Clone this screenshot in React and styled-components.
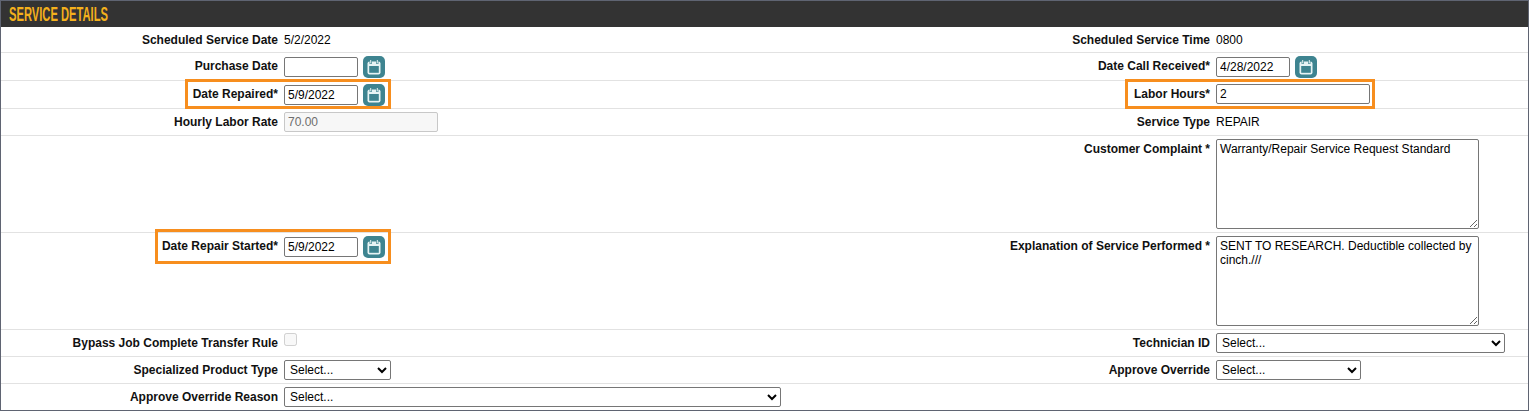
import React from 'react';
import styled, { createGlobalStyle } from 'styled-components';

const GlobalStyle = createGlobalStyle`
  html, body { margin: 0; padding: 0; background: #fff; }
  body { font-family: "Liberation Sans", Arial, sans-serif; font-size: 12px; color: #000; }
`;

const Panel = styled.div`
  box-sizing: border-box;
  width: 1529px;
  height: 411px;
  border: 1px solid #5f6472;
  overflow: hidden;
`;

const Title = styled.div`
  height: 26px;
  background: #333333;
  overflow: hidden;
`;

// no condensed font is installed, so the bold face is squeezed
const TitleText = styled.span`
  display: inline-block;
  margin-left: 8px;
  color: #f4b01c;
  font-size: 20.5px;
  font-weight: 700;
  line-height: 25px;
  white-space: nowrap;
  transform: scaleX(0.545);
  transform-origin: left center;
`;

const Row = styled.div`
  box-sizing: border-box;
  display: grid;
  grid-template-columns: 277px 654px 278px 1fr;
  height: ${p => p.$h}px;
  border-bottom: ${p => (p.$last ? 'none' : '1px solid #e2e2e2')};
`;

const Label = styled.div`
  font-weight: 700;
  font-size: 12px;
  text-align: right;
  white-space: nowrap;
  padding-top: 6px;
  line-height: 14px;
  color: #111;
`;

const Cell = styled.div`
  display: flex;
  align-items: flex-start;
  padding: 3px 0 0 6px;
  gap: 5px;
`;

const Plain = styled.span`
  line-height: 14px;
  margin-top: 3px;
`;

const TextInput = styled.input`
  box-sizing: border-box;
  width: ${p => p.$w}px;
  height: 20px;
  margin-top: ${p => p.$top || 0}px;
  border: 1px solid #767676;
  border-radius: 2px;
  padding: 0 3px;
  font: 12px "Liberation Sans", Arial, sans-serif;
  color: #000;
  background: ${p => (p.disabled ? '#f7f7f7' : '#fff')};
  border-color: ${p => (p.disabled ? '#c8c8c8' : '#767676')};
  &:disabled { color: #6d6d6d; }
`;

const Area = styled.textarea`
  box-sizing: border-box;
  width: 263px;
  height: 90px;
  border: 1px solid #767676;
  border-radius: 2px;
  padding: 2px 3px;
  font: 12px/14px "Liberation Sans", Arial, sans-serif;
  color: #000;
  resize: vertical;
`;

const Select = styled.select`
  box-sizing: border-box;
  width: ${p => p.$w}px;
  height: 20px;
  padding-left: 1px;
  border: 1px solid #767676;
  border-radius: 2px;
  font: 12px "Liberation Sans", Arial, sans-serif;
  color: #000;
  background: #fff;
`;

const Check = styled.input`
  width: 13px;
  height: 13px;
  margin: 0;
`;

const CalButton = styled.button`
  box-sizing: border-box;
  width: 22px;
  height: 22px;
  padding: 0;
  border: none;
  border-radius: 5px;
  background: #3e8490;
  display: flex;
  align-items: center;
  justify-content: center;
`;

const Highlight = styled.div`
  position: absolute;
  box-sizing: border-box;
  border: 3px solid #f78e1e;
  pointer-events: none;
  left: ${p => p.$x}px;
  top: ${p => p.$y}px;
  width: ${p => p.$w}px;
  height: ${p => p.$h}px;
`;

const Stage = styled.div`
  position: relative;
  width: 1529px;
  height: 411px;
`;

const CalendarIcon = () => (
  <svg width="14" height="15" viewBox="0 0 14 15">
    <rect x="0.5" y="1.5" width="13" height="13" rx="2" fill="#e6f3f4" />
    <rect x="2.2" y="6" width="9.6" height="6.8" fill="#3e8490" />
    <rect x="2.6" y="0" width="2.2" height="4" fill="#3e8490" />
    <rect x="9.2" y="0" width="2.2" height="4" fill="#3e8490" />
    <rect x="3.2" y="0" width="1" height="3.4" fill="#e6f3f4" />
    <rect x="9.8" y="0" width="1" height="3.4" fill="#e6f3f4" />
  </svg>
);

const DateField = ({ value }) => (
  <>
    <TextInput $w={74} $top={1} defaultValue={value} />
    <CalButton type="button"><CalendarIcon /></CalButton>
  </>
);

const opts = <option>Select...</option>;

export default function App() {
  return (
    <Stage>
      <GlobalStyle />
      <Panel>
        <Title><TitleText>SERVICE DETAILS</TitleText></Title>
        <Row $h={26}>
          <Label>Scheduled Service Date</Label>
          <Cell><Plain>5/2/2022</Plain></Cell>
          <Label>Scheduled Service Time</Label>
          <Cell><Plain>0800</Plain></Cell>
        </Row>
        <Row $h={28}>
          <Label>Purchase Date</Label>
          <Cell><DateField value="" /></Cell>
          <Label>Date Call Received*</Label>
          <Cell><DateField value="4/28/2022" /></Cell>
        </Row>
        <Row $h={28}>
          <Label>Date Repaired*</Label>
          <Cell><DateField value="5/9/2022" /></Cell>
          <Label>Labor Hours*</Label>
          <Cell><TextInput $w={154} defaultValue="2" /></Cell>
        </Row>
        <Row $h={27}>
          <Label>Hourly Labor Rate</Label>
          <Cell><TextInput $w={154} disabled defaultValue="70.00" /></Cell>
          <Label>Service Type</Label>
          <Cell><Plain>REPAIR</Plain></Cell>
        </Row>
        <Row $h={97}>
          <div />
          <div />
          <Label>Customer Complaint *</Label>
          <Cell><Area defaultValue="Warranty/Repair Service Request Standard" /></Cell>
        </Row>
        <Row $h={97}>
          <Label>Date Repair Started*</Label>
          <Cell><DateField value="5/9/2022" /></Cell>
          <Label>Explanation of Service Performed *</Label>
          <Cell><Area defaultValue="SENT TO RESEARCH. Deductible collected by cinch.///" /></Cell>
        </Row>
        <Row $h={27}>
          <Label>Bypass Job Complete Transfer Rule</Label>
          <Cell><Check type="checkbox" disabled /></Cell>
          <Label>Technician ID</Label>
          <Cell><Select $w={289}>{opts}</Select></Cell>
        </Row>
        <Row $h={27}>
          <Label>Specialized Product Type</Label>
          <Cell><Select $w={107}>{opts}</Select></Cell>
          <Label>Approve Override</Label>
          <Cell><Select $w={145}>{opts}</Select></Cell>
        </Row>
        <Row $h={26} $last>
          <Label>Approve Override Reason</Label>
          <Cell><Select $w={497}>{opts}</Select></Cell>
          <div />
          <div />
        </Row>
      </Panel>
      <Highlight $x={185} $y={79} $w={206} $h={30} />
      <Highlight $x={1125} $y={79} $w={250} $h={30} />
      <Highlight $x={155} $y={229} $w={236} $h={35} />
    </Stage>
  );
}
